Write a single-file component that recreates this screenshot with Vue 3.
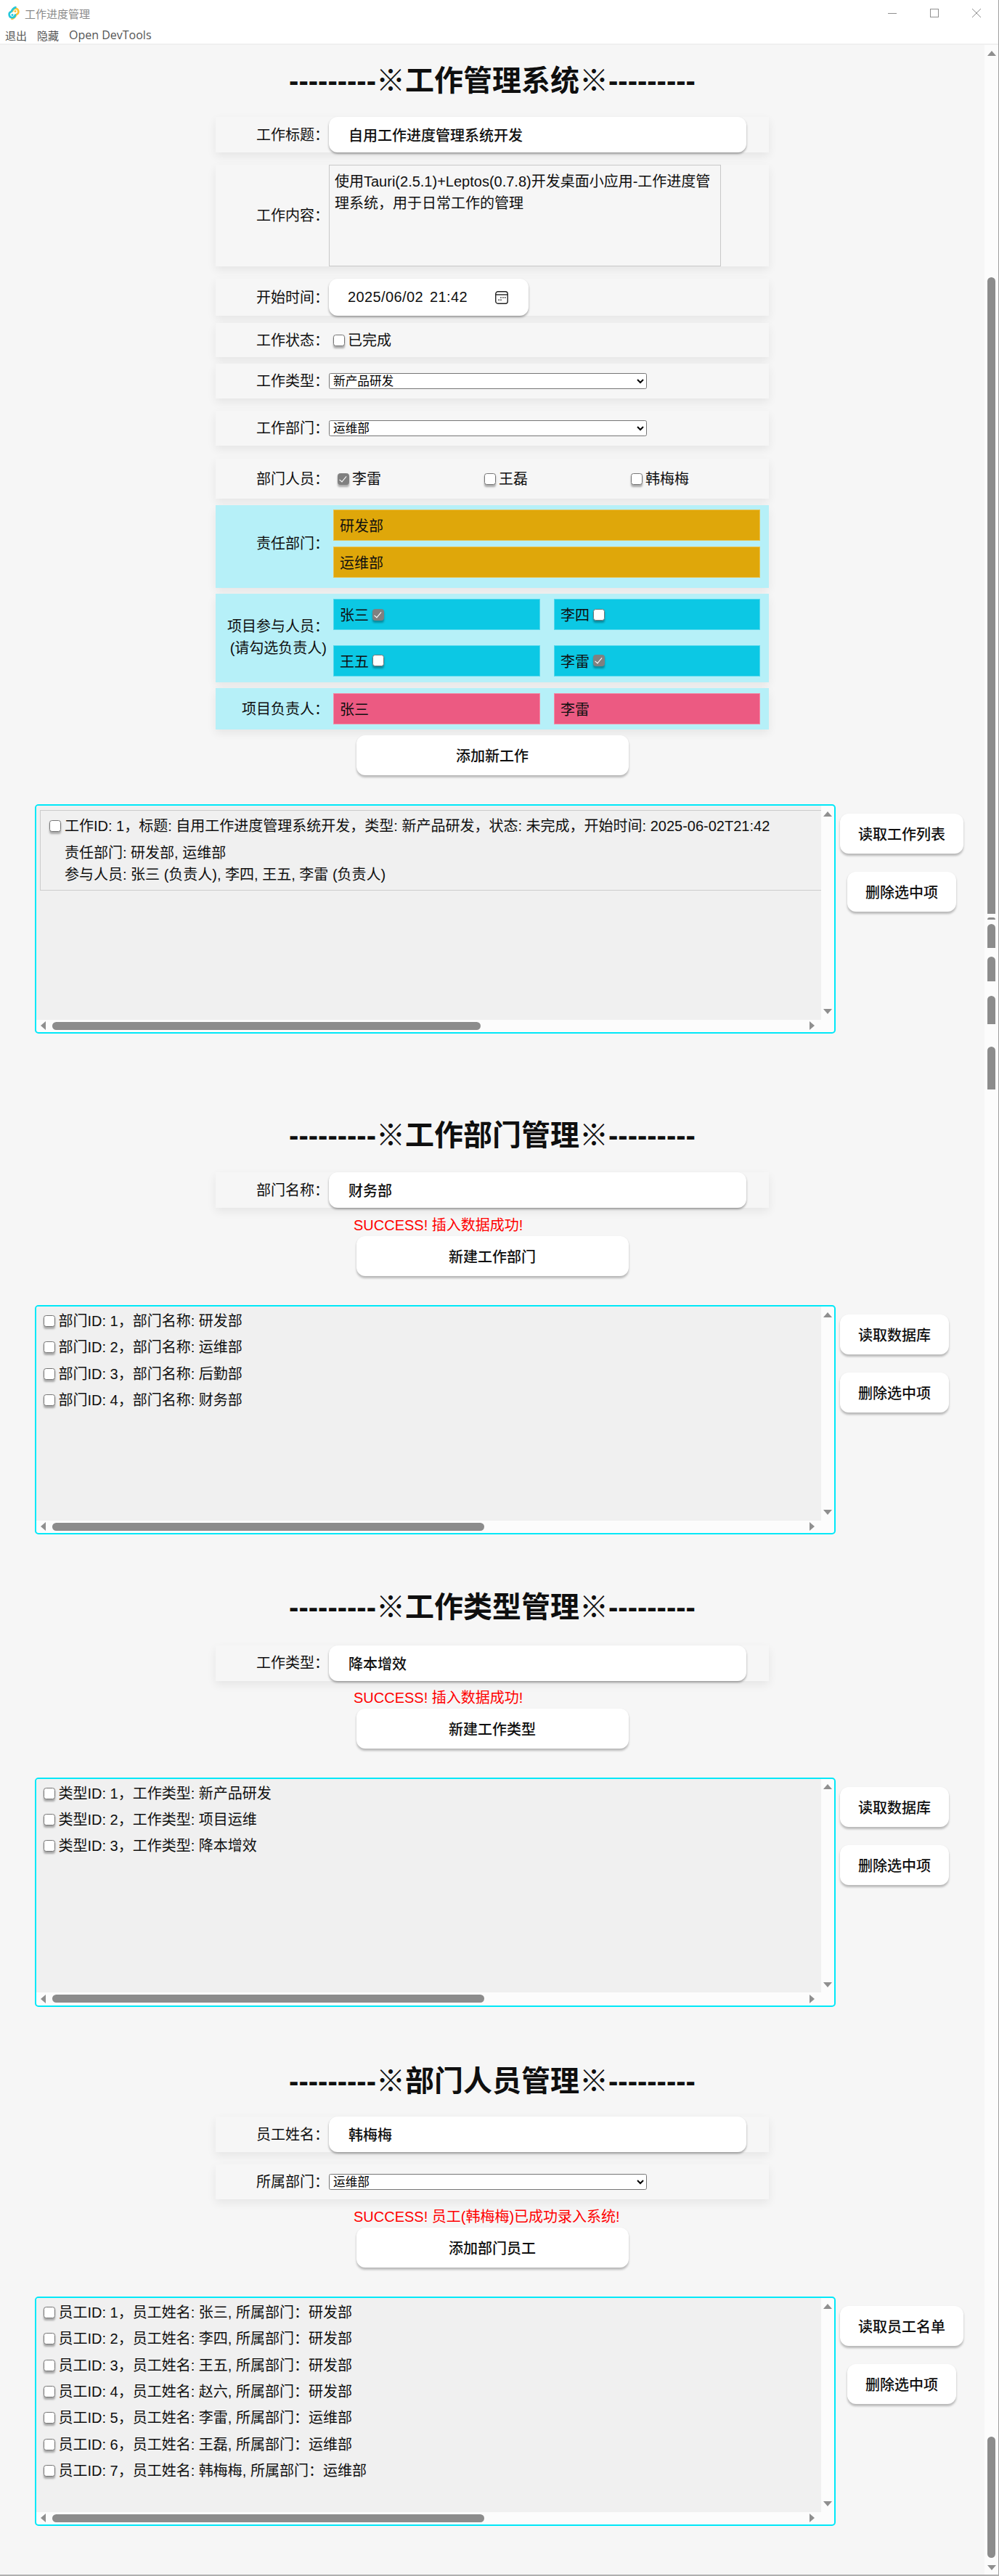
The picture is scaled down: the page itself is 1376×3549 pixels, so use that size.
<template>
  <div class="window">
    <header class="topbar">
      <div class="caption">
        <svg class="logo" width="18" height="20" viewBox="0 0 18 20" fill="none">
          <path d="M7 7.5 A4.2 4.2 0 1 1 12.5 12 Q10.5 16.5 6.5 18" stroke="#ffc131" stroke-width="2.6" stroke-linecap="round" />
          <path d="M11 12.5 A4.2 4.2 0 1 1 5.5 8 Q7.5 3.5 11.5 2" stroke="#24c8db" stroke-width="2.6" stroke-linecap="round" />
          <circle cx="11" cy="7.5" r="1.5" fill="#ffc131" />
          <circle cx="7" cy="12.5" r="1.5" fill="#24c8db" />
        </svg>
        <span class="caption-title">工作进度管理</span>
        <div class="win-controls">
          <svg width="12" height="12" viewBox="0 0 12 12"><path d="M0 6.5H12" stroke="#909090" /></svg>
          <svg width="12" height="12" viewBox="0 0 12 12"><rect x="0.5" y="0.5" width="11" height="11" fill="none" stroke="#909090" /></svg>
          <svg width="12" height="12" viewBox="0 0 12 12"><path d="M0 0L12 12M12 0L0 12" stroke="#909090" /></svg>
        </div>
      </div>
      <nav class="menu">
        <span>退出</span>
        <span>隐藏</span>
        <span class="menu-latin">Open DevTools</span>
      </nav>
    </header>

    <div class="body">
      <main class="main">
        <!-- 工作管理 -->
        <h1 class="heading">{{ dashes }}<span class="mark">※</span>工作管理系统<span class="mark">※</span>{{ dashes }}</h1>

        <div class="row row-title">
          <label class="label">工作标题&#xFF1A;</label>
          <input class="text-input" value="自用工作进度管理系统开发" />
        </div>

        <div class="row row-content">
          <label class="label">工作内容&#xFF1A;</label>
          <textarea class="content-area" :value="workContent"></textarea>
        </div>

        <div class="row row-time">
          <label class="label">开始时间&#xFF1A;</label>
          <div class="date-box">
            <span>2025/06/02 21:42</span>
            <svg width="18" height="18" viewBox="0 0 18 18" fill="none">
              <rect x="0.75" y="0.75" width="16.5" height="16.5" rx="3.2" stroke="#222" stroke-width="1.4" />
              <path d="M1 5H17" stroke="#222" stroke-width="1.4" />
              <path d="M7.2 8.2h1.5v1.5h-1.5zM10.2 8.2h1.5v1.5h-1.5zM13 8.2h1.5v1.5h-1.5zM4.4 11.4h1.5v1.5h-1.5zM7.2 11.4h1.5v1.5h-1.5z" fill="#222" />
            </svg>
          </div>
        </div>

        <div class="row row-state">
          <label class="label">工作状态&#xFF1A;</label>
          <label class="check state-check"><input type="checkbox" class="box" />已完成</label>
        </div>

        <div class="row row-select row-type">
          <label class="label">工作类型&#xFF1A;</label>
          <select class="select"><option>新产品研发</option></select>
        </div>

        <div class="row row-select row-dept">
          <label class="label">工作部门&#xFF1A;</label>
          <select class="select"><option>运维部</option></select>
        </div>

        <div class="row row-people">
          <label class="label">部门人员&#xFF1A;</label>
          <div class="people">
            <label v-for="p in deptPeople" :key="p.name" class="check">
              <input type="checkbox" class="box" :checked="p.checked" />{{ p.name }}
            </label>
          </div>
        </div>

        <div class="row blue row-owner-dept">
          <label class="label">责任部门&#xFF1A;</label>
          <div class="chips one-col">
            <div v-for="d in ownerDepts" :key="d" class="chip gold">{{ d }}</div>
          </div>
        </div>

        <div class="row blue row-members">
          <label class="label">项目参与人员&#xFF1A;<br /><span class="hint">(请勾选负责人)</span></label>
          <div class="chips two-col">
            <div v-for="m in members" :key="m.name" class="chip cyan">
              {{ m.name }}<input type="checkbox" class="box" :checked="m.checked" />
            </div>
          </div>
        </div>

        <div class="row blue row-leaders">
          <label class="label">项目负责人&#xFF1A;</label>
          <div class="chips two-col">
            <div v-for="l in leaders" :key="l" class="chip pink">{{ l }}</div>
          </div>
        </div>

        <button class="btn btn-main add-work">添加新工作</button>

        <div class="list-wrap">
          <div class="panel">
            <div class="panel-top">
              <div class="panel-content">
                <div class="work-item">
                  <div class="work-line">
                    <input type="checkbox" class="box" />{{ workLine }}
                  </div>
                  <div class="work-sub">责任部门: 研发部, 运维部</div>
                  <div class="work-sub">参与人员: 张三 (负责人), 李四, 王五, 李雷 (负责人)</div>
                </div>
              </div>
              <div class="vbar"><i class="tri up"></i><i class="tri down"></i></div>
            </div>
            <div class="hbar">
              <i class="tri left"></i>
              <div class="hthumb thumb-short"></div>
              <i class="tri right"></i>
            </div>
          </div>
          <div class="side">
            <button class="btn">读取工作列表</button>
            <button class="btn btn-del">删除选中项</button>
          </div>
        </div>

        <!-- 其余三个管理区块 -->
        <section v-for="s in sections" :key="s.key" class="section" :class="s.key">
          <h1 class="heading">{{ dashes }}<span class="mark">※</span>{{ s.heading }}<span class="mark">※</span>{{ dashes }}</h1>
          <div class="row row-title">
            <label class="label">{{ s.fieldLabel }}</label>
            <input class="text-input" :value="s.fieldValue" />
          </div>
          <div v-if="s.selectLabel" class="row row-select row-belong">
            <label class="label">{{ s.selectLabel }}</label>
            <select class="select"><option>{{ s.selectValue }}</option></select>
          </div>
          <div class="message">{{ s.message }}</div>
          <button class="btn btn-main">{{ s.button }}</button>
          <div class="list-wrap">
            <div class="panel">
              <div class="panel-top">
                <div class="panel-content list-content">
                  <div v-for="item in s.items" :key="item" class="list-item">
                    <input type="checkbox" class="box" />{{ item }}
                  </div>
                </div>
                <div class="vbar"><i class="tri up"></i><i class="tri down"></i></div>
              </div>
              <div class="hbar">
                <i class="tri left"></i>
                <div class="hthumb"></div>
                <i class="tri right"></i>
              </div>
            </div>
            <div class="side">
              <button class="btn">{{ s.readLabel }}</button>
              <button class="btn btn-del">删除选中项</button>
            </div>
          </div>
        </section>
      </main>

      <aside class="page-bar">
        <i class="tri up page-up"></i>
        <div
          v-for="(t, i) in thumbs"
          :key="i"
          class="page-thumb"
          :class="{ whole: t.whole }"
          :style="{ marginTop: t.gap + 'px', height: t.h + 'px' }"
        ></div>
        <i class="tri down page-down"></i>
      </aside>
    </div>
  </div>
</template>

<script setup>
// full-width punctuation, the text in the lists mixes it with ascii
const COLON = '\uFF1A'
const COMMA = '\uFF0C'

const dashes = '---------'

const workContent = `使用Tauri(2.5.1)+Leptos(0.7.8)开发桌面小应用-工作进度管理系统${COMMA}用于日常工作的管理`
const workLine = `工作ID: 1${COMMA}标题: 自用工作进度管理系统开发${COMMA}类型: 新产品研发${COMMA}状态: 未完成${COMMA}开始时间: 2025-06-02T21:42`

const deptPeople = [
  { name: '李雷', checked: true },
  { name: '王磊', checked: false },
  { name: '韩梅梅', checked: false }
]
const ownerDepts = ['研发部', '运维部']
const members = [
  { name: '张三', checked: true },
  { name: '李四', checked: false },
  { name: '王五', checked: false },
  { name: '李雷', checked: true }
]
const leaders = ['张三', '李雷']

const deptItem = (id, name) => `部门ID: ${id}${COMMA}部门名称: ${name}`
const typeItem = (id, name) => `类型ID: ${id}${COMMA}工作类型: ${name}`
const staffItem = (id, name, dept) => `员工ID: ${id}${COMMA}员工姓名: ${name}, 所属部门${COLON}${dept}`

const sections = [
  {
    key: 'sec-dept',
    heading: '工作部门管理',
    fieldLabel: `部门名称${COLON}`,
    fieldValue: '财务部',
    message: 'SUCCESS! 插入数据成功!',
    button: '新建工作部门',
    readLabel: '读取数据库',
    items: [
      deptItem(1, '研发部'),
      deptItem(2, '运维部'),
      deptItem(3, '后勤部'),
      deptItem(4, '财务部')
    ]
  },
  {
    key: 'sec-type',
    heading: '工作类型管理',
    fieldLabel: `工作类型${COLON}`,
    fieldValue: '降本增效',
    message: 'SUCCESS! 插入数据成功!',
    button: '新建工作类型',
    readLabel: '读取数据库',
    items: [
      typeItem(1, '新产品研发'),
      typeItem(2, '项目运维'),
      typeItem(3, '降本增效')
    ]
  },
  {
    key: 'sec-staff',
    heading: '部门人员管理',
    fieldLabel: `员工姓名${COLON}`,
    fieldValue: '韩梅梅',
    selectLabel: `所属部门${COLON}`,
    selectValue: '运维部',
    message: 'SUCCESS! 员工(韩梅梅)已成功录入系统!',
    button: '添加部门员工',
    readLabel: '读取员工名单',
    items: [
      staffItem(1, '张三', '研发部'),
      staffItem(2, '李四', '研发部'),
      staffItem(3, '王五', '研发部'),
      staffItem(4, '赵六', '研发部'),
      staffItem(5, '李雷', '运维部'),
      staffItem(6, '王磊', '运维部'),
      staffItem(7, '韩梅梅', '运维部')
    ]
  }
]

// the reference is a stitched capture, so the page scrollbar thumb shows up in pieces
const thumbs = [
  { gap: 305, h: 877 },
  { gap: 5, h: 3 },
  { gap: 6, h: 33 },
  { gap: 12, h: 34 },
  { gap: 20, h: 39 },
  { gap: 31, h: 59 },
  { gap: 1856, h: 167, whole: true }
]
</script>

<style>
html,
body {
  margin: 0;
  background: #f6f6f6;
}
</style>

<style scoped>
.window {
  box-sizing: border-box;
  width: 1376px;
  height: 3549px;
  display: flex;
  flex-direction: column;
  overflow: hidden;
  background: #f6f6f6;
  border-right: 1px solid #a0a0a0;
  border-bottom: 2px solid #b0b0b0;
  color: #0f0f0f;
  font-family: "Liberation Sans", "Noto Sans CJK SC", sans-serif;
  font-size: 20px;
}

.topbar {
  box-sizing: border-box;
  height: 62px;
  flex: none;
  background: #fff;
  border-bottom: 2px solid #f0f0f0;
}

.caption {
  height: 36px;
  display: flex;
  align-items: center;
  padding-left: 10px;
}

.logo {
  flex: none;
}

.caption-title {
  margin-left: 6px;
  font-size: 15px;
  color: #8a8a8a;
}

.win-controls {
  margin-left: auto;
  display: flex;
  gap: 46px;
  padding-right: 24px;
}

.menu {
  height: 24px;
  display: flex;
  align-items: center;
  gap: 14px;
  padding-left: 7px;
  font-family: "Open Sans", "Noto Sans CJK SC", sans-serif;
  font-size: 15px;
  color: #555;
}

.menu-latin {
  font-size: 16px;
}

.body {
  flex: 1;
  display: flex;
  min-height: 0;
}

.main {
  flex: 1;
  min-width: 0;
  display: flex;
  flex-direction: column;
  align-items: center;
  padding-top: 27px;
}

.section {
  width: 100%;
  display: flex;
  flex-direction: column;
  align-items: center;
}

.sec-dept {
  margin-top: 118px;
}

.sec-type {
  margin-top: 77.5px;
}

.sec-staff {
  margin-top: 80.5px;
}

.heading {
  margin: 0 0 26px;
  height: 46px;
  line-height: 44px;
  font-size: 40px;
  font-weight: 700;
  white-space: nowrap;
}

.mark {
  font-weight: 400;
}

.sec-dept .heading {
  margin-bottom: 27px;
}

.sec-type .heading {
  margin-bottom: 29px;
}

.sec-staff .heading {
  margin-bottom: 25px;
}

.row {
  box-sizing: border-box;
  width: 762px;
  flex: none;
  display: flex;
  align-items: center;
  background: #f6f6f6;
  box-shadow: 0 5px 12px rgba(0, 0, 0, 0.07);
}

.label {
  width: 156px;
  flex: none;
  text-align: right;
  line-height: 30px;
  white-space: nowrap;
}

.hint {
  margin-right: 3px;
}

.row-title {
  height: 49px;
  margin-bottom: 17px;
}

.section .row-title {
  margin-bottom: 0;
}

.sec-staff .row-title {
  margin-bottom: 17px;
}

.row-content {
  height: 140px;
  margin-bottom: 17px;
}

.row-time {
  height: 51px;
  margin-bottom: 10px;
}

.row-state {
  height: 47px;
  margin-bottom: 9px;
}

.row-select {
  height: 48px;
}

.row-type {
  margin-bottom: 17px;
}

.row-dept {
  margin-bottom: 18px;
}

.row-people {
  height: 55px;
  margin-bottom: 9px;
}

.text-input {
  box-sizing: border-box;
  width: 575px;
  height: 100%;
  padding: 0 27px;
  border: none;
  outline: none;
  border-radius: 12px;
  background: #fff;
  box-shadow: 0 2px 3px rgba(0, 0, 0, 0.35);
  color: #0f0f0f;
  font: 500 20px "Liberation Sans", "Noto Sans CJK SC", sans-serif;
}

.content-area {
  box-sizing: border-box;
  width: 540px;
  height: 100%;
  padding: 7px 7px;
  border: 1px solid #c8c8c8;
  outline: none;
  resize: none;
  overflow: hidden;
  background: #f6f6f6;
  color: #0f0f0f;
  font: 20px/30px "Liberation Sans", "Noto Sans CJK SC", sans-serif;
}

.date-box {
  box-sizing: border-box;
  width: 275px;
  height: 100%;
  display: flex;
  align-items: center;
  justify-content: space-between;
  padding: 0 28px 0 26px;
  border-radius: 12px;
  background: #fff;
  box-shadow: 0 2px 3px rgba(0, 0, 0, 0.35);
  letter-spacing: 0.4px;
  word-spacing: 3px;
}

.check {
  display: flex;
  align-items: center;
  gap: 4px;
  line-height: 30px;
}

.state-check {
  margin-left: 6px;
}

.box {
  appearance: none;
  box-sizing: border-box;
  position: relative;
  width: 16px;
  height: 16px;
  flex: none;
  margin: 0;
  border: 1px solid #767676;
  border-radius: 3.5px;
  background: #fff;
  box-shadow: 0 2.5px 2.5px rgba(0, 0, 0, 0.3);
}

.box:checked {
  background: #808080;
  border-color: #808080;
}

.box:checked::after {
  content: "";
  position: absolute;
  left: 4.4px;
  top: 1.2px;
  width: 4px;
  height: 8.5px;
  border: solid #fff;
  border-width: 0 1.8px 1.8px 0;
  transform: rotate(40deg);
}

.select {
  box-sizing: border-box;
  width: 437.5px;
  height: 22.5px;
  padding: 0 0 0 1px;
  border: 1px solid #767676;
  border-radius: 2.5px;
  background-color: #fff;
  color: #000;
  font: 16.67px "Liberation Sans", "Noto Sans CJK SC", sans-serif;
}

.people {
  flex: 1;
  display: grid;
  grid-template-columns: repeat(3, 202px);
  padding-left: 12px;
}

.blue {
  background: #b6f0f8;
  padding-right: 12px;
}

.row-owner-dept {
  padding-top: 6px;
  padding-bottom: 13.5px;
  margin-bottom: 8px;
}

.row-members {
  padding-top: 7.5px;
  padding-bottom: 8px;
  margin-bottom: 8px;
}

.row-leaders {
  padding-top: 7.5px;
  padding-bottom: 6.5px;
  margin-bottom: 8.5px;
}

.chips {
  flex: 1;
  display: grid;
  margin-left: 6px;
}

.one-col {
  row-gap: 8px;
}

.two-col {
  grid-template-columns: 285px 284px;
  column-gap: 19px;
  row-gap: 20.5px;
}

.chip {
  box-sizing: border-box;
  height: 43px;
  display: flex;
  align-items: center;
  gap: 5px;
  padding-left: 8px;
  border: 1px solid rgba(255, 255, 255, 0.3);
}

.gold {
  background: #dfa70a;
}

.cyan {
  background: #0cc8e4;
}

.pink {
  background: #ec5a82;
}

.btn {
  box-sizing: border-box;
  height: 55px;
  padding: 0 25px;
  border: none;
  border-radius: 12px;
  background: #fff;
  box-shadow: 0 2.5px 3px rgba(0, 0, 0, 0.25);
  color: #0f0f0f;
  font: 500 20px "Liberation Sans", "Noto Sans CJK SC", sans-serif;
  white-space: nowrap;
}

.btn-main {
  width: 375px;
  flex: none;
}

.message {
  box-sizing: border-box;
  width: 762px;
  height: 24px;
  margin: 12px 0 3px;
  padding-left: 190px;
  line-height: 24px;
  color: #ff0000;
}

.sec-type .message {
  margin-top: 11px;
}

.list-wrap {
  box-sizing: border-box;
  width: 100%;
  display: flex;
  align-items: flex-start;
  padding-left: 48px;
  margin-top: 40px;
}

.panel {
  box-sizing: border-box;
  width: 1103px;
  height: 316px;
  flex: none;
  display: flex;
  flex-direction: column;
  border: 2.5px solid #00e8f8;
  border-radius: 5px;
  background: #fcfcfc;
  overflow: hidden;
}

.panel-top {
  flex: 1;
  min-height: 0;
  display: flex;
}

.panel-content {
  flex: 1;
  min-width: 0;
  background: #f0f0f0;
  line-height: 30px;
}

.list-content {
  padding: 2px 0 0 9.5px;
}

.work-item {
  box-sizing: border-box;
  height: 111px;
  margin: 5.5px 0 0 5px;
  padding: 6px 0 0 12px;
  border: solid #ccc;
  border-width: 1px 0 1px 1px;
}

.work-line {
  display: flex;
  align-items: center;
  gap: 5px;
  white-space: nowrap;
}

.work-sub {
  padding-left: 21px;
}

.work-sub:nth-child(2) {
  margin-top: 7px;
}

.list-item {
  height: 36.3px;
  display: flex;
  align-items: center;
  gap: 5px;
  white-space: nowrap;
}

.vbar {
  width: 18.5px;
  flex: none;
  display: flex;
  flex-direction: column;
  justify-content: space-between;
  align-items: center;
  padding: 7.5px 0;
  box-sizing: border-box;
}

.hbar {
  height: 17.5px;
  flex: none;
  display: flex;
  align-items: center;
  padding-left: 5.5px;
  padding-right: 27px;
}

.hthumb {
  width: 595px;
  height: 11px;
  margin-left: 9px;
  border-radius: 5.5px;
  background: #8c8c8c;
}

.thumb-short {
  width: 590px;
}

.tri {
  display: block;
  width: 0;
  height: 0;
  flex: none;
  border-style: solid;
  border-color: transparent;
}

.tri.up {
  border-width: 0 6.5px 7px;
  border-bottom-color: #8f8f8f;
}

.tri.down {
  border-width: 7px 6.5px 0;
  border-top-color: #8f8f8f;
}

.tri.left {
  border-width: 6.5px 7px 6.5px 0;
  border-right-color: #8f8f8f;
}

.tri.right {
  margin-left: auto;
  border-width: 6.5px 0 6.5px 7px;
  border-left-color: #8f8f8f;
}

.side {
  display: flex;
  flex-direction: column;
  align-items: center;
  gap: 25px;
  margin-left: 6px;
  padding-top: 13px;
}

.page-bar {
  width: 19px;
  flex: none;
  display: flex;
  flex-direction: column;
  align-items: center;
  background: #fcfcfc;
}

.page-up {
  margin-top: 8px;
}

.page-down {
  margin-top: 10px;
}

.page-thumb {
  width: 11px;
  flex: none;
  background: #8c8c8c;
  border-radius: 5.5px 5.5px 0 0;
}

.page-thumb.whole {
  border-radius: 5.5px;
}
</style>
